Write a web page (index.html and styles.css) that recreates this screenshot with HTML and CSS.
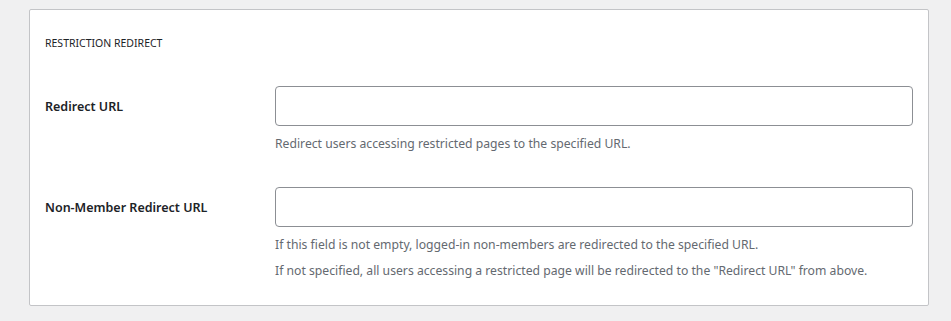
FILE: index.html
```html
<!DOCTYPE html>
<html>
<head>
<meta charset="utf-8">
<link rel="stylesheet" href="styles.css">
</head>
<body>
<div class="page">
  <div class="panel">
    <h2 class="panel-title">Restriction Redirect</h2>
    <div class="field field-first">
      <label class="field-label">Redirect URL</label>
      <div class="field-control">
        <input type="text" class="text-input">
        <p class="desc desc-first">Redirect users accessing restricted pages to the specified URL.</p>
      </div>
    </div>
    <div class="field field-second">
      <label class="field-label">Non-Member Redirect URL</label>
      <div class="field-control">
        <input type="text" class="text-input">
        <p class="desc desc-first">If this field is not empty, logged-in non-members are redirected to the specified URL.</p>
        <p class="desc desc-next">If not specified, all users accessing a restricted page will be redirected to the "Redirect URL" from above.</p>
      </div>
    </div>
  </div>
</div>
</body>
</html>
```
FILE: styles.css
```css
html, body {
  margin: 0;
  padding: 0;
  background: #f0f0f1;
}
body {
  font-family: "Noto Sans", "Open Sans", sans-serif;
  color: #1d2327;
}
.page {
  padding: 9px 0 0 29px;
}
.panel {
  box-sizing: border-box;
  width: 900px;
  background: #fff;
  border: 1px solid #c3c4c7;
  border-radius: 2px;
  padding: 0 15px 24px 15px;
}
.panel-title {
  margin: 25px 0 0 0;
  font-size: 10.5px;
  line-height: 17px;
  font-weight: 400;
  text-transform: uppercase;
  color: #1d2327;
}
.field {
  display: flex;
}
.field-first {
  margin-top: 34px;
}
.field-second {
  margin-top: 33px;
}
.field-label {
  width: 230px;
  flex: none;
  height: 40px;
  line-height: 42px;
  font-size: 12.5px;
  font-weight: 600;
  color: #1d2327;
}
.field-control {
  flex: none;
  width: 638px;
}
.text-input {
  display: block;
  box-sizing: border-box;
  width: 638px;
  height: 40px;
  margin: 0;
  border: 1px solid #8c8f94;
  border-radius: 4px;
  background: #fff;
  font-family: inherit;
}
.desc {
  margin: 0;
  font-size: 12.2px;
  line-height: 20px;
  color: #646970;
}
.desc-first {
  margin-top: 8px;
}
.desc-next {
  margin-top: 6px;
}
```
